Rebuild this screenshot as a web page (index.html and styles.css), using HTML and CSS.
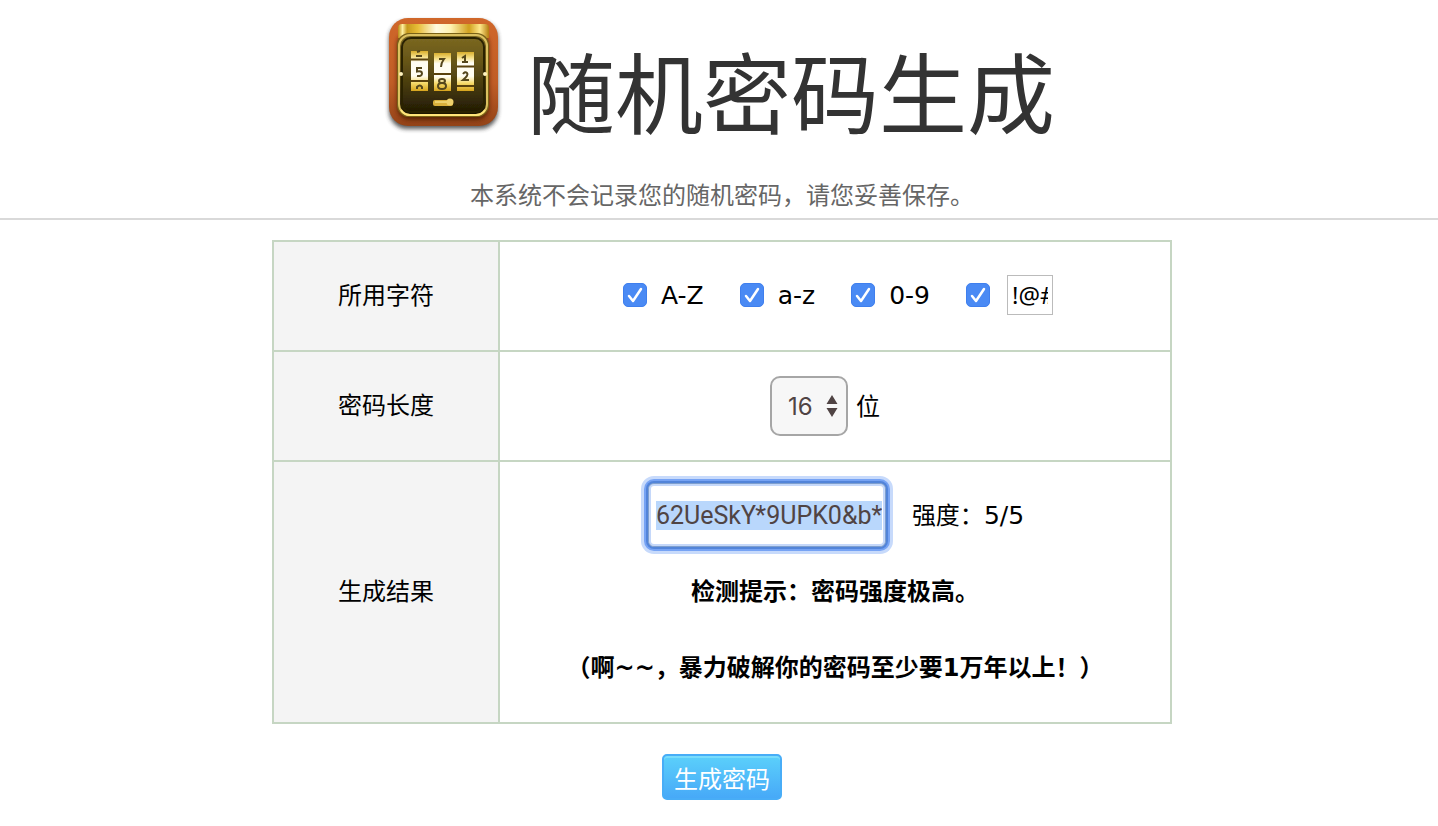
FILE: index.html
```html
<!DOCTYPE html>
<html lang="zh-CN">
<head>
<meta charset="utf-8">
<title>随机密码生成</title>
<link rel="stylesheet" href="styles.css">
</head>
<body>
<header class="header">
  <div class="brand">
    <svg class="logo" viewBox="0 0 130 130" aria-hidden="true">
      <defs>
        <linearGradient id="orange" x1="0" y1="0" x2="0" y2="1"><stop offset="0" stop-color="#d0672a"/><stop offset=".6" stop-color="#c05d26"/><stop offset="1" stop-color="#934317"/></linearGradient>
        <linearGradient id="gold" x1="0" y1="0" x2="1" y2="0"><stop offset="0" stop-color="#b98a10"/><stop offset=".05" stop-color="#fff0a0"/><stop offset=".1" stop-color="#c79a1c"/><stop offset=".22" stop-color="#e8be38"/><stop offset=".42" stop-color="#fffbe0"/><stop offset=".58" stop-color="#fff2b0"/><stop offset=".78" stop-color="#d0a01c"/><stop offset=".9" stop-color="#ffe88a"/><stop offset="1" stop-color="#b57d10"/></linearGradient>
        <linearGradient id="panel" x1="0" y1="0" x2="0" y2="1"><stop offset="0" stop-color="#7d6a22"/><stop offset=".35" stop-color="#655417"/><stop offset=".8" stop-color="#352b08"/><stop offset="1" stop-color="#1c1604"/></linearGradient>
        <linearGradient id="reel" x1="0" y1="0" x2="0" y2="1"><stop offset="0" stop-color="#d9ae2c"/><stop offset=".15" stop-color="#f6e08a"/><stop offset=".28" stop-color="#fffdf2"/><stop offset=".62" stop-color="#fffdf2"/><stop offset=".8" stop-color="#f6da6a"/><stop offset="1" stop-color="#d6a41c"/></linearGradient>
        <filter id="soft" x="-20%" y="-20%" width="140%" height="140%"><feGaussianBlur stdDeviation="2"/></filter>
        <filter id="fine"><feGaussianBlur stdDeviation=".7"/></filter>
      </defs>
      <rect x="10" y="13" width="109" height="108" rx="18" fill="#333" opacity=".8" filter="url(#soft)"/>
      <rect x="10" y="10" width="109" height="108" rx="19" fill="url(#orange)"/>
      <rect x="18" y="24" width="92" height="88" rx="13" fill="#4a1d05" opacity=".8" filter="url(#soft)"/>
      <g filter="url(#fine)">
        <path d="M19 30v-10q0-4 4-4h83q4 0 4 4v10z" fill="url(#gold)"/>
        <rect x="18" y="25" width="92" height="84" rx="12" fill="#7a6219"/>
        <rect x="20" y="27" width="88" height="80" rx="11" fill="url(#panel)" stroke="#dcc160" stroke-width="2"/>
        <rect x="23" y="30" width="82" height="74" rx="9" fill="none" stroke="#2a2206" stroke-width="2"/>
        <path d="M22 102q3 5 9 5h66q6 0 9-5" fill="none" stroke="#ffe57a" stroke-width="2"/>
        <circle cx="22" cy="66" r="2" fill="#fff3be"/><circle cx="106" cy="66" r="2" fill="#fff3be"/>
        <rect x="32" y="43" width="17" height="40" fill="url(#reel)"/>
        <rect x="55" y="45" width="17" height="38" fill="url(#reel)"/>
        <rect x="78" y="44" width="17" height="39" fill="url(#reel)"/>
        <path d="M32 51.500h17M32 73h17M55 66h17M78 58.500h17M78 78h17" stroke="#5a430c" stroke-width="2"/>
        <g fill="none" stroke="#55471d" stroke-width="2">
          <path d="M43 60h-5v3.500q5-1 5 2t-5 2.500M37 48h6M38 44l3-1M38 81v-2q3-3 5 0v2"/>
          <path d="M60 51h5q-3 4-3 8M63 71q-3 0-3 2t3 2q3 0 3-2t-3-2zM63 75q-4 0-4 3t4 3q4 0 4-3t-4-3z"/>
          <path d="M83 50l3-2v6M84 66q2-3 4-1t-4 7h6M83 54h6"/>
        </g>
        <rect x="54" y="92" width="20" height="6" rx="2" fill="#d9b03a"/><path d="M56 94h12" stroke="#fff0a0"/>
        <circle cx="71" cy="94" r="3.500" fill="#eed16c"/>
      </g>
    </svg>
    <h1 class="title">随机密码生成</h1>
  </div>
  <p class="notice">本系统不会记录您的随机密码，请您妥善保存。</p>
</header>
<form class="generator" onsubmit="return false">
  <table class="settings">
    <tr>
      <th scope="row">所用字符</th>
      <td>
        <div class="charsets">
          <label class="choice"><input class="tick" type="checkbox" checked>A-Z</label>
          <label class="choice"><input class="tick" type="checkbox" checked>a-z</label>
          <label class="choice"><input class="tick" type="checkbox" checked>0-9</label>
          <div class="choice"><input class="tick" type="checkbox" aria-label="特殊字符" checked><input class="symbols" type="text" value="!@#$%^&amp;*" aria-label="特殊字符列表"></div>
        </div>
      </td>
    </tr>
    <tr>
      <th scope="row"><label for="length">密码长度</label></th>
      <td>
        <div class="length-row">
          <select class="length" id="length"><option>8</option><option>12</option><option selected>16</option><option>20</option></select>
          <span class="caption">位</span>
        </div>
      </td>
    </tr>
    <tr>
      <th scope="row"><label for="result">生成结果</label></th>
      <td class="result-cell">
        <div class="result-row">
          <input class="password" id="result" type="text" value="62UeSkY*9UPK0&amp;b*">
          <span class="caption">强度：<span class="score">5/5</span></span>
        </div>
        <p class="hint">检测提示：密码强度极高。</p>
        <p class="hint">（啊~~，暴力破解你的密码至少要1万年以上！）</p>
      </td>
    </tr>
  </table>
  <button class="generate" type="submit">生成密码</button>
</form>
<script src="script.js"></script>
</body>
</html>
```
FILE: styles.css
```css
* { box-sizing: border-box; }
body {
  margin: 0;
  background: #fff;
  color: #000;
  font-family: "DejaVu Sans", "Noto Sans CJK SC", sans-serif;
  font-size: 24px;
}
.header { padding: 8px 0 6px; border-bottom: 2px solid #d9d9d9; }
.brand { display: flex; justify-content: center; align-items: flex-end; gap: 18px; padding-right: 4px; }
.logo { width: 130px; height: 130px; flex: none; }
.title {
  margin: 0 0 5px;
  color: #333;
  font-family: "Noto Sans CJK SC", sans-serif;
  font-size: 88px;
  font-weight: 400;
  line-height: 88px;
}
.notice {
  margin: 38px 0 0;
  padding-left: 6px;
  color: #666;
  font-family: "Noto Sans CJK SC", sans-serif;
  line-height: 36px;
  text-align: center;
}
.generator {
  display: flex;
  flex-direction: column;
  align-items: center;
  gap: 30px;
  padding: 20px 0 24px 6px;
}
.settings { width: 900px; max-width: 100%; border-collapse: collapse; }
.settings th, .settings td {
  height: 110px;
  padding: 0;
  border: 2px solid #c6d6c3;
  text-align: center;
}
.settings th { width: 226px; padding-bottom: 6px; background: #f4f4f4; font-weight: 400; }
.charsets { display: flex; justify-content: center; gap: 36px; padding: 0 0 2px 6px; }
.choice { display: flex; align-items: center; gap: 14px; font-size: 25px; }
.tick {
  appearance: none;
  width: 24px;
  height: 24px;
  margin: 0;
  border: 1px solid #3f7fee;
  border-radius: 5px;
  background: #4a8af4 url("data:image/svg+xml,%3Csvg xmlns='http://www.w3.org/2000/svg' viewBox='0 0 22 22'%3E%3Cpath d='M5 12l4 5 8-12' fill='none' stroke='white' stroke-width='2.5' stroke-linecap='round' stroke-linejoin='round'/%3E%3C/svg%3E");
}
.tick:not(:checked) { background: #fff; }
.symbols {
  width: 46px;
  height: 40px;
  margin-left: 3px;
  padding: 0 4px 2px;
  border: 1px solid #bbb;
  background: #fff;
  color: #000;
  font-family: "Noto Sans", sans-serif;
  font-size: 24px;
}
.length-row { display: flex; justify-content: center; align-items: center; gap: 8px; padding-right: 20px; }
.caption { padding-bottom: 4px; }
.score { font-size: 25px; }
.length {
  appearance: none;
  width: 78px;
  height: 60px;
  padding: 0 16px;
  border: 2px solid #a6a6a6;
  border-radius: 10px;
  background: #f7f7f7 url("data:image/svg+xml,%3Csvg xmlns='http://www.w3.org/2000/svg' viewBox='0 0 12 24'%3E%3Cpath d='M6 1l5.500 9H.5zM6 23l5.500-9H.5z' fill='%23504444'/%3E%3C/svg%3E") no-repeat right 8px center / 12px 24px;
  color: #504444;
  font-family: Inter, sans-serif;
  font-size: 24px;
}
.settings .result-cell { height: 262px; padding: 14px 0 16px; }
.result-row { display: flex; justify-content: center; align-items: center; gap: 26px; height: 78px; padding-left: 2px; }
.password {
  width: 238px;
  height: 64px;
  padding: 0 3px 0 7px;
  border: 1px solid #7e9fce;
  border-radius: 6px;
  outline: none;
  background: #fff;
  box-shadow: inset 0 0 0 2px #c5d8fa, 0 0 0 2px #5284d9, 0 0 0 4px #76a3f4, 0 0 0 7px #c7dafb;
  color: #504444;
  font-family: Roboto, sans-serif;
  font-size: 25px;
}
.password::selection { background: #b9d7fc; color: #504444; }
.hint { margin: 0; font-weight: 700; line-height: 76px; }
.generate {
  width: 120px;
  height: 46px;
  padding: 2px 0 0;
  border: 2px solid #48adf7;
  border-radius: 5px;
  background: linear-gradient(#5bd0fb, #47a9f8);
  box-shadow: inset 0 2px #78dcfc;
  color: #fff;
  font-family: "Noto Sans CJK SC", sans-serif;
  font-size: 24px;
  line-height: 36px;
}
```
FILE: script.js
```js
const result = document.getElementById("result");
result.focus();
result.select();
```
